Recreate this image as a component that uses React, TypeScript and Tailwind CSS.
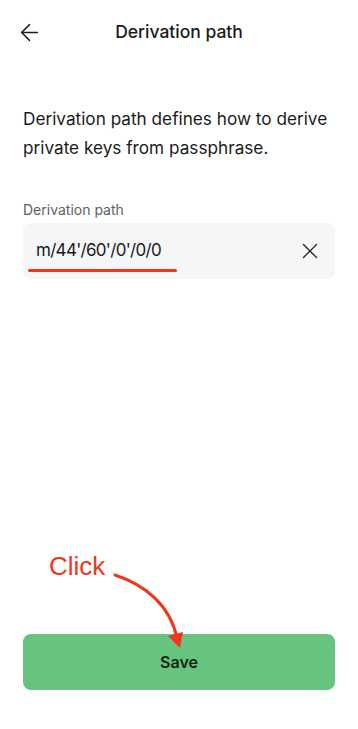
import { ArrowLeft, X } from 'lucide-react';

export default function App() {
  return (
    <div
      className="relative flex h-[729px] w-[358px] flex-col bg-white text-[#1b1b1b]"
      style={{ fontFamily: 'Inter, "Noto Sans", sans-serif' }}
    >
      {/* header */}
      <div className="relative flex h-16 items-center justify-center">
        <button className="absolute left-[16px] top-[19px]">
          <ArrowLeft className="h-[27px] w-[27px]" strokeWidth={1.3} />
        </button>
        <h1 className="text-[17.5px] font-medium">Derivation path</h1>
      </div>

      <div className="flex flex-1 flex-col px-[23px]">
        <p className="mt-10 text-[17.2px] leading-[29px]">
          Derivation path defines how to derive private keys from passphrase.
        </p>

        <label className="mt-[38px] text-[14px] leading-5 text-[#5d6166]">Derivation path</label>
        <div className="relative mt-[3px] flex h-14 items-center rounded-lg bg-[#f5f6f8] pl-[13px] pr-[12px]">
          <span className="flex-1 text-[17px] tracking-[-0.7px]">m/44'/60'/0'/0/0</span>
          <X className="h-[26px] w-[26px] text-[#2a2a2a]" strokeWidth={1.3} />
          <div className="absolute left-[5px] top-[46px] h-[3px] w-[149px] rounded-full bg-[#f0361b]" />
        </div>

        <div className="flex-1" />

        <button className="mb-[39px] flex h-14 items-center justify-center rounded-lg bg-[#67c47f] text-[16px] font-semibold text-[#13231a]">
          Save
        </button>
      </div>

      {/* annotation */}
      <span
        className="absolute left-[49px] top-[549px] text-[26px] leading-[34px] text-[#f0361b]"
        style={{ fontFamily: '"Liberation Sans", Arial, sans-serif' }}
      >
        Click
      </span>
      <svg className="absolute left-0 top-0" width="358" height="729" viewBox="0 0 358 729">
        <path d="M115 575 C 145 585, 170 605, 177 638" fill="none" stroke="#f0361b" strokeWidth="3" strokeLinecap="round" />
        <path d="M168 636 L 183 632 L 180 648 Z" fill="#f0361b" />
      </svg>
    </div>
  );
}
